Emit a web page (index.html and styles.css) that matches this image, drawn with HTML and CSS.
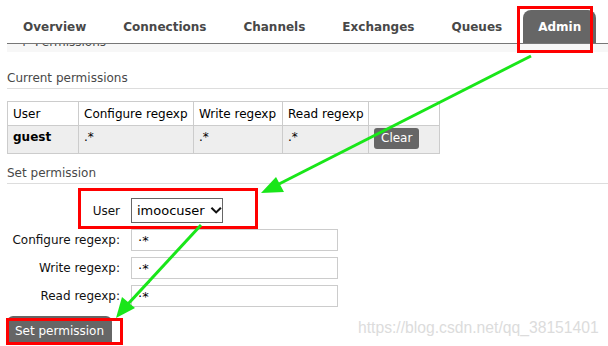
FILE: index.html
```html
<!DOCTYPE html>
<html lang="en">
<head>
    <meta charset="UTF-8">
    <title>RabbitMQ Management - Admin</title>
    <link rel="stylesheet" href="styles.css">
</head>
<body>
    <nav class="tabs">
        <a class="tab">Overview</a>
        <a class="tab">Connections</a>
        <a class="tab">Channels</a>
        <a class="tab">Exchanges</a>
        <a class="tab">Queues</a>
        <a class="tab active">Admin</a>
    </nav>

    <div class="scrolled-header"><span class="toggle">+</span><span>Permissions</span></div>

    <div class="main">
        <h3 class="section first">Current permissions</h3>
        <table class="perms">
            <thead>
                <tr>
                    <th class="c-user">User</th>
                    <th class="c-conf">Configure regexp</th>
                    <th class="c-write">Write regexp</th>
                    <th class="c-read">Read regexp</th>
                    <th class="c-act"></th>
                </tr>
            </thead>
            <tbody>
                <tr>
                    <td class="name">guest</td>
                    <td>.*</td>
                    <td>.*</td>
                    <td>.*</td>
                    <td><button class="btn small">Clear</button></td>
                </tr>
            </tbody>
        </table>

        <h3 class="section second">Set permission</h3>
        <form class="perm-form">
            <label>User</label>
            <div class="select-box">imoocuser
                <svg width="13" height="9" viewBox="0 0 13 9"><path d="M1.5 1.5 L6.5 6.5 L11.5 1.5" fill="none" stroke="#111" stroke-width="2.2"/></svg>
            </div>
            <label>Configure regexp:</label>
            <input type="text" value="·*">
            <label>Write regexp:</label>
            <input type="text" value="·*">
            <label>Read regexp:</label>
            <input type="text" value="·*">
        </form>
        <button class="btn big">Set permission</button>
    </div>

    <div class="watermark">https://blog.csdn.net/qq_38151401</div>

    <svg class="marks" width="608" height="346" viewBox="0 0 608 346">
        <g fill="none" stroke="#f00" stroke-width="3">
            <rect x="518.5" y="7.5" width="73" height="44"/>
            <rect x="79.5" y="189.5" width="177" height="38"/>
            <rect x="7.5" y="319.5" width="114" height="24"/>
        </g>
        <g stroke="#19e619" stroke-width="3" fill="#19e619">
            <line x1="531" y1="56" x2="279" y2="184"/>
            <polygon points="261,193 276,177 284,192" stroke="none"/>
            <line x1="201" y1="225" x2="128" y2="304"/>
            <polygon points="116,318 122,297 135,308" stroke="none"/>
        </g>
    </svg>
</body>
</html>
```

FILE: styles.css
```css
body, html {
    margin: 0;
    padding: 0;
    font-family: "DejaVu Sans", Verdana, sans-serif;
    font-size: 12px;
    color: #000;
    background-color: #fff;
    width: 608px;
    height: 346px;
    overflow: hidden;
    position: relative;
}

.tabs {
    display: flex;
    gap: 9px;
    margin-left: 7px;
    padding: 10px 0 0 2px;
    border-bottom: 1px solid #777;
    height: 44px;
    box-sizing: border-box;
}

.tab {
    display: block;
    padding: 2px 14px 0 14px;
    font-size: 12px;
    font-weight: bold;
    color: #484848;
    line-height: 31px;
    border-radius: 8px 8px 0 0;
    white-space: nowrap;
}

.tab.active {
    background-color: #666;
    color: #fff;
    padding: 2px 15px 0 15px;
    margin-left: -2px;
}

.scrolled-header {
    margin-left: 7px;
    height: 8px;
    overflow: hidden;
    background-color: #f7f7f7;
    color: #484848;
    font-size: 12px;
    line-height: 12px;
    display: flex;
    gap: 6px;
    padding-left: 12px;
}

.scrolled-header span {
    margin-top: -8px;
}

.main {
    padding: 0 0 0 7px;
}

.section {
    padding: 0 0 2px 0;
    font-size: 12px;
    font-weight: normal;
    color: #484848;
    border-bottom: 1px solid #ddd;
    line-height: 15px;
}

.section.first {
    margin: 19px 0 12px 0;
}

.section.second {
    margin: 12px 0 14px 0;
}

.perms {
    border-collapse: collapse;
    table-layout: fixed;
    width: 433px;
    font-size: 12px;
}

.perms th, .perms td {
    border: 1px solid #ccc;
    text-align: left;
    padding: 0 5px;
    font-weight: normal;
    white-space: nowrap;
}

.perms th {
    height: 23px;
}

.perms td {
    height: 28px;
    vertical-align: top;
    padding-top: 4px;
    box-sizing: border-box;
    background-color: #eee;
}

.perms td.name {
    font-weight: bold;
}

.c-user { width: 60px; }
.c-conf { width: 104px; }
.c-write { width: 78px; }
.c-read { width: 75px; }
.c-act { width: 60px; }

.btn {
    background-color: #666;
    color: #fff;
    border: none;
    font-family: "DejaVu Sans", Verdana, sans-serif;
    font-size: 12px;
    cursor: pointer;
}

.btn.small {
    padding: 2px 7px;
    border-radius: 3px;
    line-height: 17px;
    margin: -2px 0 0 0;
}

.btn.big {
    display: block;
    width: 105px;
    height: 28px;
    padding: 2px 0 0 0;
    border-radius: 6px 6px 0 0;
    margin-top: 9px;
}

.perm-form {
    display: grid;
    grid-template-columns: 113px 207px;
    column-gap: 11px;
    row-gap: 6px;
    align-items: center;
}

.perm-form label {
    text-align: right;
    font-size: 12px;
    color: #111;
}

.select-box {
    border: 1px solid #666;
    display: flex;
    align-items: center;
    gap: 5px;
    padding-left: 5px;
    box-sizing: border-box;
    width: 92px;
    height: 25px;
    font-size: 13px;
}

.perm-form input {
    height: 22px;
    border: 1px solid #ccc;
    padding: 0 6px;
    box-sizing: border-box;
    font-family: "DejaVu Sans", Verdana, sans-serif;
    font-size: 13px;
    width: 207px;
}

.watermark {
    position: absolute;
    left: 358px;
    top: 319px;
    font-family: "Liberation Sans", Arial, sans-serif;
    font-size: 15.7px;
    color: #dcdcdc;
}

.marks {
    position: absolute;
    left: 0;
    top: 0;
}
```
